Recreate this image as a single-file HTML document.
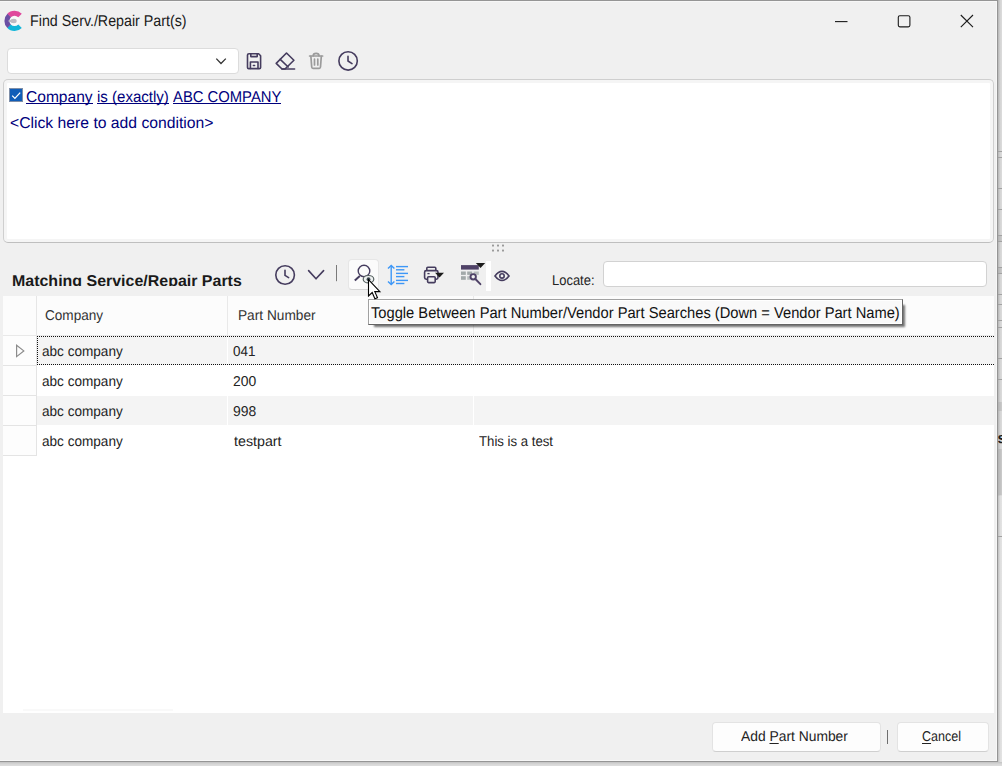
<!DOCTYPE html>
<html lang="en">
<head>
<meta charset="utf-8">
<title>Find Serv./Repair Part(s)</title>
<style>
html,body{margin:0;padding:0}
body{width:1002px;height:766px;position:relative;overflow:hidden;background:#d8d8d8;font-family:"Liberation Sans",sans-serif}
.abs,.t,svg{position:absolute}
.t{white-space:pre;line-height:1;transform-origin:0 0;display:block;text-rendering:geometricPrecision}
.t u{text-decoration:underline;text-underline-offset:1.5px;text-decoration-thickness:1px}
#desk{left:0;top:0;width:1002px;height:766px;background:#dcdcdc}
#win{left:-1px;top:0;width:999px;height:762px;box-sizing:border-box;background:#f0f0f0;border:1px solid #959595;box-shadow:inset 0 1px 0 #f7f7f7,inset -1px 0 0 #f7f7f7,inset 0 -1px 0 #f7f7f7}
.ul{height:1px;background:#00007c}
.btn{box-sizing:border-box;background:#fdfdfd;border:1px solid #e3e3e3;border-bottom-color:#cfcfcf;border-radius:4px}
.row{left:37px;width:957px;height:30px}
.ind{left:3px;width:33px;height:29px;background:#fdfdfd;border-right:1px solid #e4e4e4;border-bottom:1px solid #e4e4e4}
</style>
</head>
<body>
<div id="desk" class="abs"></div>
<div class="abs" style="left:998px;top:0;width:4px;height:766px;background:linear-gradient(to right,#b6b6b6,#d4d4d4 55%,#dcdcdc)"></div><div class="abs" style="left:998px;top:496px;width:4px;height:270px;background:linear-gradient(to right,#c0c0c0,#dedede 55%,#e4e4e4)"></div><div class="abs" style="left:998px;top:235px;width:4px;height:6px;background:linear-gradient(to right,#b2b2b2,#cccccc)"></div><div class="abs" style="left:998px;top:267px;width:4px;height:6px;background:linear-gradient(to right,#b2b2b2,#cccccc)"></div><div class="abs" style="left:998px;top:402px;width:4px;height:9px;background:linear-gradient(to right,#b2b2b2,#cccccc)"></div><div class="abs" style="left:998px;top:449px;width:4px;height:46px;background:linear-gradient(to right,#b2b2b2,#cccccc)"></div><div class="abs" style="left:998px;top:151px;width:4px;height:1px;background:#a2a2a2"></div><div class="abs" style="left:998px;top:157px;width:4px;height:1px;background:#a2a2a2"></div><div class="abs" style="left:998px;top:188px;width:4px;height:1px;background:#a2a2a2"></div><div class="abs" style="left:998px;top:209px;width:4px;height:1px;background:#a2a2a2"></div><div class="abs" style="left:998px;top:235px;width:4px;height:1px;background:#a2a2a2"></div><div class="abs" style="left:998px;top:241px;width:4px;height:1px;background:#a2a2a2"></div><div class="abs" style="left:998px;top:267px;width:4px;height:1px;background:#a2a2a2"></div><div class="abs" style="left:998px;top:273px;width:4px;height:1px;background:#a2a2a2"></div><div class="abs" style="left:998px;top:294px;width:4px;height:1px;background:#a2a2a2"></div><div class="abs" style="left:998px;top:304px;width:4px;height:1px;background:#a2a2a2"></div><div class="abs" style="left:998px;top:320px;width:4px;height:1px;background:#a2a2a2"></div><div class="abs" style="left:998px;top:327px;width:4px;height:1px;background:#a2a2a2"></div><div class="abs" style="left:998px;top:358px;width:4px;height:1px;background:#a2a2a2"></div><div class="abs" style="left:998px;top:379px;width:4px;height:1px;background:#a2a2a2"></div><div class="abs" style="left:998px;top:536px;width:4px;height:1px;background:#a2a2a2"></div><div class="abs" style="left:0;top:762px;width:1002px;height:4px;background:linear-gradient(to bottom,#c2c2c2,#d6d6d6 50%,#dedede)"></div><span class="t" style="left:997.6px;top:430.5px;font-size:15px;font-weight:700;color:#1c1c1c">s</span>
<div id="win" class="abs"></div>

<!-- title bar -->
<svg style="left:2px;top:8px" width="24" height="26" viewBox="2 8 24 26" ><circle cx="14.6" cy="20.9" r="5.4" fill="#f9f9f9"/><path d="M20.04,26.34A7.7,7.7 0 0 1 8.97,26.15" fill="none" stroke="#12b6d9" stroke-width="5"/><path d="M8.97,15.65A7.7,7.7 0 0 1 20.04,15.46" fill="none" stroke="#e0489c" stroke-width="5"/><path d="M9.16,26.34A7.7,7.7 0 0 1 9.16,15.46" fill="none" stroke="#6a4fa3" stroke-width="5"/><path d="M7.7,20.9L12.6,18.9V22.9Z" fill="#bcbbc3"/><ellipse cx="13.8" cy="20.9" rx="2.9" ry="2.25" fill="#bcbbc3"/></svg>
<svg style="left:825px;top:8px" width="160" height="28" viewBox="825 8 160 28" ><g fill="none" stroke="#1a1a1a" stroke-width="1.1"><path d="M835,21.6H847.5"/><rect x="898.3" y="15.7" width="11.6" height="11.2" rx="1.6"/><path d="M960.8,15L973,27.2M973,15L960.8,27.2"/></g></svg>

<!-- filter toolbar -->
<div class="abs" style="left:7px;top:48px;width:232px;height:26px;box-sizing:border-box;background:#fff;border:1px solid #dcdcdc;border-radius:4px"></div>
<svg style="left:210px;top:48px" width="160" height="28" viewBox="210 48 160 28" ><path d="M216.3,58.6L221,63.5L225.8,58.6" fill="none" stroke="#333" stroke-width="1.3"/><g fill="none" stroke="#453c5e" stroke-width="1.6" stroke-linejoin="round" stroke-linecap="round"><path d="M249,53.7H258.6L260.6,55.8V67.4Q260.6,68.6 259.4,68.6H248.7Q247.5,68.6 247.5,67.4V55Q247.5,53.7 249,53.7Z"/><path d="M250.8,54V56.6H257.2V54"/><path d="M250.4,68.4V62H258V68.4"/><path d="M253.4,65.5H254.6"/><path d="M286.5,53L293.9,60.2L285,69H282L276.2,63.4Z"/><path d="M280.2,59.4L288.2,67"/><path d="M282,69H294.6"/><circle cx="348.1" cy="60.9" r="9.2" stroke-width="1.6"/><path d="M348,56.4V61L352,63.6" stroke-width="1.6"/></g><g fill="none" stroke="#9b9b9b" stroke-width="1.7" stroke-linecap="round" stroke-linejoin="round"><path d="M309.6,56H322.6"/><path d="M313.2,55.8Q313.2,53.4 316.1,53.4Q319,53.4 319,55.8"/><path d="M310.9,56.4L311.7,67Q311.8,68.3 313,68.3H319.2Q320.4,68.3 320.5,67L321.3,56.4"/><path d="M314.5,59.2V65M317.8,59.2V65"/></g></svg>

<!-- filter panel -->
<div class="abs" style="left:3px;top:79px;width:991px;height:164px;box-sizing:border-box;background:#f5f5f5;border:1px solid #cfcfcf;border-bottom-color:#bfbfbf;border-radius:5px"></div>
<div class="abs" style="left:7px;top:83px;width:983px;height:156px;background:#fff;border-radius:1px"></div>
<div class="abs" style="left:9px;top:88px;width:14px;height:14px;box-sizing:border-box;background:#0f5db8;border:1px solid #7f8fa8"></div><svg style="left:9px;top:88px" width="14" height="14" viewBox="9 88 14 14" ><path d="M12.2,95.6L14.9,98.4L20.2,92.6" fill="none" stroke="#fff" stroke-width="1.3"/></svg>
<div class="abs ul" style="left:26px;top:103px;width:67px"></div>
<div class="abs ul" style="left:97px;top:103px;width:72px"></div>
<div class="abs ul" style="left:173px;top:103px;width:108px"></div>

<!-- splitter dots -->
<svg style="left:490px;top:243px" width="18" height="12" viewBox="490 243 18 12" ><rect x="492" y="244.6" width="2" height="2" rx=".6" fill="#9a9a9a"/><rect x="492" y="249.6" width="2" height="2" rx=".6" fill="#9a9a9a"/><rect x="497" y="244.6" width="2" height="2" rx=".6" fill="#9a9a9a"/><rect x="497" y="249.6" width="2" height="2" rx=".6" fill="#9a9a9a"/><rect x="502" y="244.6" width="2" height="2" rx=".6" fill="#9a9a9a"/><rect x="502" y="249.6" width="2" height="2" rx=".6" fill="#9a9a9a"/></svg>

<!-- grid toolbar -->
<div class="abs" style="left:0;top:262px;width:260px;height:24px;overflow:hidden"><span class="t" style="left:11.80px;top:12px;font-size:15.7px;font-weight:700;color:#1a1a1a;transform:scaleX(1.0177)">Matching Service/Repair Parts</span></div>
<div class="abs" style="left:348px;top:259px;width:31px;height:31px;box-sizing:border-box;background:#fbfbfb;border:1px solid #e6e6e6;border-bottom-color:#d6d6d6;border-radius:4px"></div>
<div class="abs" style="left:486px;top:261px;width:5px;height:30px;background:#fff"></div>
<svg style="left:270px;top:258px" width="245" height="36" viewBox="270 258 245 36" ><g fill="none" stroke="#453c5e" stroke-width="1.6" stroke-linecap="round" stroke-linejoin="round"><circle cx="285.1" cy="275" r="9.3"/><path d="M285,270.2V275.4L288.6,277.6"/><path d="M308.6,270.6L316,278.8L323.6,270.6"/><circle cx="364" cy="271" r="5.8" stroke-width="1.4"/><path d="M359.8,276L354.8,280.4" stroke-width="2" stroke-linecap="butt"/></g><path d="M336.5,265V281.2" stroke="#7a7a7a" stroke-width="1"/><ellipse cx="368.5" cy="279.2" rx="5.3" ry="3.7" fill="#eef1f1" stroke="#566160" stroke-width="1.2"/><circle cx="368.5" cy="279.2" r="1.9" fill="#3d4a52"/><g fill="none" stroke="#3d97f7" stroke-width="1.4"><path d="M391.2,266V284"/><path d="M388,268.6L391.2,265.4L394.4,268.6"/><path d="M388,281.4L391.2,284.6L394.4,281.4"/><path d="M396,266.6H408"/><path d="M396,269.8H404.4"/><path d="M396,273.4H408"/><path d="M396,276.6H404.4"/><path d="M396,280.4H408"/><path d="M396,283.5H404.4"/></g><g fill="none" stroke="#453c5e" stroke-width="1.6" stroke-linejoin="round"><path d="M426.8,270.6V268.2Q426.8,267.2 427.8,267.2H434.8Q435.8,267.2 435.8,268.2V270.6"/><rect x="424.6" y="270.6" width="13.4" height="8.6" rx="1.6"/><rect x="427.6" y="276.8" width="7.6" height="5.8" rx="1" fill="#f0f0f0"/><path d="M427.4,273.6H429.6" stroke-width="1.3"/></g><path d="M435,272.8H444L439.5,277.6Z" fill="#1c1c1c"/><rect x="461" y="265.1" width="17.8" height="4.5" fill="#4f4267"/><g fill="#a2a9a9"><rect x="461" y="271.5" width="4.8" height="3.4"/><rect x="467.2" y="271.5" width="5" height="3.4"/><rect x="473.6" y="271.5" width="5.2" height="3.4" fill="#b8bdbd"/><rect x="461" y="276.2" width="4.8" height="3.6"/><rect x="467.2" y="276.2" width="3" height="3.6" fill="#b8bdbd"/></g><circle cx="473.2" cy="276.8" r="2.7" fill="#f0f0f0" stroke="#4f4267" stroke-width="1.9"/><path d="M475.4,279L480.4,284.2" stroke="#4f4267" stroke-width="1.9" stroke-linecap="round"/><path d="M475.8,262.9H485.2L480.5,268Z" fill="#1c1c1c"/><g fill="none" stroke="#453c5e" stroke-width="1.6"><path d="M495,275.9Q498.4,271.4 502,271.4Q505.6,271.4 509,275.9Q505.6,280.4 502,280.4Q498.4,280.4 495,275.9Z"/><circle cx="502" cy="275.9" r="2.2"/></g></svg>
<div class="abs" style="left:603px;top:261px;width:384px;height:26px;box-sizing:border-box;background:#fff;border:1px solid #d2d2d2;border-radius:4px"></div>

<!-- grid -->
<div class="abs" style="left:3px;top:296px;width:991px;height:417px;background:#fff"></div>
<div class="abs" style="left:3px;top:296px;width:991px;height:39px;background:#fcfcfc;border-bottom:1px solid #e9e9e9"></div>
<div class="abs" style="left:36px;top:296px;width:1px;height:39px;background:#e6e6e6"></div>
<div class="abs" style="left:227px;top:296px;width:1px;height:39px;background:#e9e9e9"></div>
<div class="abs" style="left:473px;top:296px;width:1px;height:39px;background:#e9e9e9"></div>
<div class="abs row" style="top:336px;height:29px;background:#f4f4f4"></div>
<div class="abs row" style="top:396px;height:29px;background:#f4f4f4"></div>
<div class="abs" style="left:227px;top:336px;width:1px;height:29px;background:#fff"></div>
<div class="abs" style="left:473px;top:336px;width:1px;height:29px;background:#fff"></div>
<div class="abs" style="left:227px;top:396px;width:1px;height:29px;background:#fff"></div>
<div class="abs" style="left:473px;top:396px;width:1px;height:29px;background:#fff"></div>
<div class="abs ind" style="top:336px"></div>
<div class="abs ind" style="top:366px"></div>
<div class="abs ind" style="top:396px"></div>
<div class="abs ind" style="top:426px"></div>
<div class="abs" style="left:37px;top:336px;width:957px;height:29px;box-sizing:border-box;border:1px dotted #111;border-right:none"></div>
<svg style="left:14px;top:343px" width="12" height="16" viewBox="14 343 12 16" ><path d="M16.6,345.2V356.6L23.8,350.9Z" fill="none" stroke="#8c8c8c" stroke-width="1.2"/></svg>
<div class="abs" style="left:23px;top:709px;width:150px;height:2px;background:#f9f9f9"></div>

<!-- tooltip -->
<div class="abs" style="left:368px;top:299px;width:535px;height:26px;box-sizing:border-box;background:#f9f9f9;border:1px solid;border-color:#a2a2a2 #646464 #646464 #a2a2a2;box-shadow:inset 0 0 0 1px #fff,4px 4px 2px -2px rgba(0,0,0,.55)"></div>

<!-- buttons -->
<div class="abs btn" style="left:712px;top:722px;width:169px;height:30px"></div>
<div class="abs btn" style="left:897px;top:722px;width:92px;height:30px"></div>
<div class="abs" style="left:887px;top:730px;width:1px;height:14px;background:#6e6e6e"></div>

<!-- texts -->
<span class="t" style="left:29.89px;top:14px;font-size:15.7px;font-weight:400;color:#1a1a1a;transform:scaleX(0.9088)">Find Serv./Repair Part(s)</span>
<span class="t" style="left:26.30px;top:90px;font-size:15.7px;font-weight:400;color:#00007c;transform:scaleX(0.9925)">Company</span>
<span class="t" style="left:97.30px;top:90px;font-size:15.7px;font-weight:400;color:#00007c;transform:scaleX(0.9587)">is (exactly)</span>
<span class="t" style="left:173.20px;top:90px;font-size:15.7px;font-weight:400;color:#00007c;transform:scaleX(0.9439)">ABC COMPANY</span>
<span class="t" style="left:9.90px;top:116px;font-size:15.7px;font-weight:400;color:#00007c;transform:scaleX(1.0015)">&lt;Click here to add condition&gt;</span>
<span class="t" style="left:551.90px;top:274px;font-size:14.2px;font-weight:400;color:#232323;transform:scaleX(0.9130)">Locate:</span>
<span class="t" style="left:45.10px;top:309px;font-size:14.2px;font-weight:400;color:#333;transform:scaleX(0.9574)">Company</span>
<span class="t" style="left:237.50px;top:309px;font-size:14.2px;font-weight:400;color:#333;transform:scaleX(0.9642)">Part Number</span>
<span class="t" style="left:42.40px;top:345px;font-size:14.2px;font-weight:400;color:#232323;transform:scaleX(0.9571)">abc company</span>
<span class="t" style="left:42.40px;top:375px;font-size:14.2px;font-weight:400;color:#232323;transform:scaleX(0.9571)">abc company</span>
<span class="t" style="left:42.40px;top:405px;font-size:14.2px;font-weight:400;color:#232323;transform:scaleX(0.9571)">abc company</span>
<span class="t" style="left:42.40px;top:435px;font-size:14.2px;font-weight:400;color:#232323;transform:scaleX(0.9571)">abc company</span>
<span class="t" style="left:233.30px;top:345px;font-size:14.2px;font-weight:400;color:#232323;transform:scaleX(0.9478)">041</span>
<span class="t" style="left:233.30px;top:375px;font-size:14.2px;font-weight:400;color:#232323;transform:scaleX(0.9792)">200</span>
<span class="t" style="left:233.30px;top:405px;font-size:14.2px;font-weight:400;color:#232323;transform:scaleX(0.9792)">998</span>
<span class="t" style="left:233.60px;top:435px;font-size:14.2px;font-weight:400;color:#232323;transform:scaleX(1.0043)">testpart</span>
<span class="t" style="left:479.30px;top:435px;font-size:14.2px;font-weight:400;color:#232323;transform:scaleX(0.9288)">This is a test</span>
<span class="t" style="left:371.30px;top:306px;font-size:15.7px;font-weight:400;color:#111;transform:scaleX(0.9365)">Toggle Between Part Number/Vendor Part Searches (Down = Vendor Part Name)</span>
<span class="t" style="left:741.30px;top:730px;font-size:14.2px;font-weight:400;color:#232323;transform:scaleX(0.9755)">Add <u>P</u>art Number</span>
<span class="t" style="left:922.40px;top:730px;font-size:14.2px;font-weight:400;color:#232323;transform:scaleX(0.8841)"><u>C</u>ancel</span>
<svg style="left:366px;top:277px" width="16" height="24" viewBox="366 277 16 24" ><path d="M368.5,279.6V296L372.2,292.5L374.9,298.8L377.5,297.7L374.8,291.6H379.9Z" fill="#fff" stroke="#000" stroke-width="1.1" stroke-linejoin="miter"/></svg>
</body>
</html>
